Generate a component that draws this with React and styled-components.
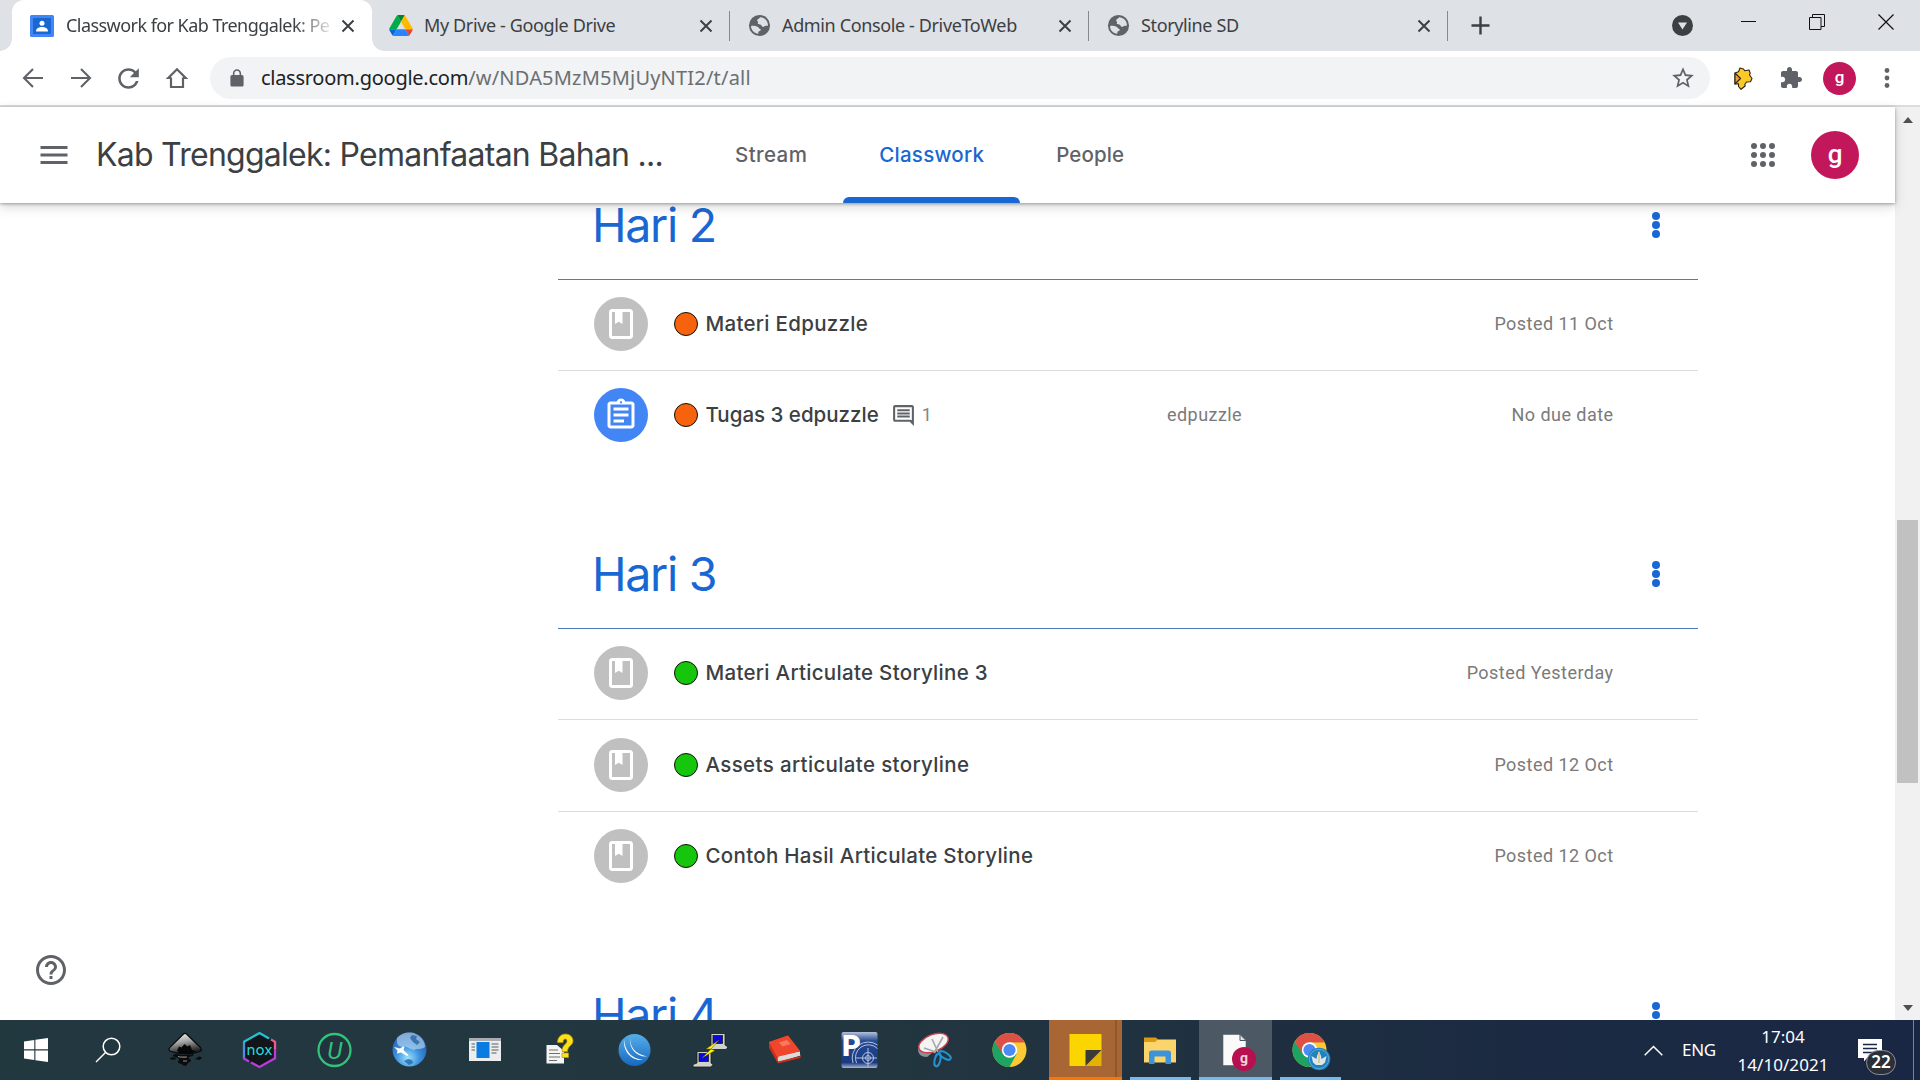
import React from "react";
import styled, { createGlobalStyle, css } from "styled-components";

const UI_FONT = `"Noto Sans", "Open Sans", sans-serif`;
const WEB_FONT = `Roboto, "Open Sans", sans-serif`;
const TITLE_FONT = `Inter, Roboto, sans-serif`;

const GlobalStyle = createGlobalStyle`
  * { box-sizing: border-box; }
  body { margin: 0; background: #fff; overflow: hidden; }
  svg { display: block; flex: none; }
`;

const Screen = styled.div`
  width: 1920px;
  height: 1080px;
  display: flex;
  flex-direction: column;
  overflow: hidden;
  background: #fff;
`;

/* ---------- Browser tab strip ---------- */
const TabStrip = styled.div`
  height: 51px;
  flex: none;
  display: flex;
  align-items: stretch;
  padding-left: 12px;
  background: #dee1e6;
`;

const BrowserTab = styled.div`
  position: relative;
  width: ${(p) => (p.$active ? 360 : 359)}px;
  margin-right: ${(p) => (p.$active ? -1 : 0)}px;
  display: flex;
  align-items: center;
  padding: 0 17px 0 18px;
  border-radius: 12px 12px 0 0;
  background: ${(p) => (p.$active ? "#fff" : "transparent")};
  ${(p) =>
    p.$active &&
    css`
      &::before,
      &::after {
        content: "";
        position: absolute;
        bottom: 0;
        width: 12px;
        height: 12px;
      }
      &::before {
        left: -12px;
        background: radial-gradient(circle at 0 0, transparent 11.5px, #fff 12px);
      }
      &::after {
        right: -12px;
        background: radial-gradient(circle at 100% 0, transparent 11.5px, #fff 12px);
      }
    `}
`;

const TabTitle = styled.div`
  flex: 1;
  margin: 0 9px 0 ${(p) => (p.$active ? 12 : 11)}px;
  padding-bottom: 1px;
  overflow: hidden;
  white-space: nowrap;
  font: 400 18px/28px ${UI_FONT};
  letter-spacing: ${(p) => (p.$active ? -0.55 : -0.37)}px;
  color: #3c4043;
  ${(p) =>
    p.$active &&
    css`
      mask-image: linear-gradient(90deg, #000 228px, transparent 270px);
    `}
`;

const TabDivider = styled.div`
  width: 1px;
  height: 30px;
  align-self: center;
  margin-left: -1px;
  background: #85898e;
`;

const NewTab = styled.div`
  display: flex;
  align-items: center;
  margin-left: 23px;
`;

const WindowControls = styled.div`
  margin-left: auto;
  display: flex;
  align-items: center;
`;

const WindowButton = styled.div`
  width: 68.500px;
  height: 43px;
  align-self: flex-start;
  display: flex;
  align-items: center;
  justify-content: center;
`;

const TabSearch = styled.div`
  margin-right: 22px;
`;

/* ---------- Address bar ---------- */
const Toolbar = styled.div`
  height: 56px;
  flex: none;
  display: flex;
  align-items: center;
  padding: 0 9px 0;
  border-bottom: 2px solid #dadce0;
  background: #fff;
`;

const ToolButton = styled.div`
  width: ${(p) => p.$w || 48}px;
  height: 48px;
  display: flex;
  align-items: center;
  justify-content: center;
`;

const Omnibox = styled.div`
  width: 1501px;
  height: 42px;
  margin: 0 8px 0 9px;
  border-radius: 21px;
  background: #f1f3f4;
  display: flex;
  align-items: center;
  padding: 0 14px 0 20px;
`;

const Url = styled.div`
  flex: 1;
  margin-left: 17px;
  font: 400 20px/30px ${UI_FONT};
  letter-spacing: 0.2px;
  color: #6b6f73;
  b {
    font-weight: 400;
    letter-spacing: -0.25px;
    color: #202124;
  }
`;

const Avatar = styled.div`
  width: ${(p) => p.$size}px;
  height: ${(p) => p.$size}px;
  border-radius: 50%;
  background: #c2185b;
  color: #fff;
  display: flex;
  align-items: center;
  justify-content: center;
  font: 500 ${(p) => p.$font}px/1 ${WEB_FONT};
  padding-bottom: ${(p) => p.$lift || 2}px;
`;

/* ---------- Classroom page ---------- */
const Viewport = styled.div`
  flex: 1;
  min-height: 0;
  display: flex;
`;

const Page = styled.div`
  position: relative;
  width: 1895px;
  display: flex;
  flex-direction: column;
`;

const ClassHeader = styled.header`
  position: relative;
  z-index: 1;
  height: 96px;
  flex: none;
  display: flex;
  align-items: center;
  padding: 0 36px;
  background: #fff;
  box-shadow: 0 1px 3px rgba(60, 64, 67, 0.45), 0 4px 11px rgba(60, 64, 67, 0.2);
`;

const ClassName = styled.div`
  width: 603px;
  margin-left: 24px;
  white-space: nowrap;
  font: 400 32px/48px ${TITLE_FONT};
  letter-spacing: -0.74px;
  color: #3c4043;
`;

const NavTab = styled.div`
  height: 96px;
  display: flex;
  flex-direction: column;
  align-items: center;
  padding: 0 36px;
  font: 500 20.500px/96px ${TITLE_FONT};
  letter-spacing: ${(p) => p.$ls}px;
  color: ${(p) => (p.$active ? "#1967d2" : "#5f6368")};
`;

const NavUnderline = styled.div`
  width: 177px;
  height: 6px;
  margin: -6px -36px 0;
  border-radius: 6px 6px 0 0;
  background: #1967d2;
`;

const HeaderActions = styled.div`
  margin-left: auto;
  display: flex;
  align-items: center;
  gap: 30px;
`;

const Content = styled.main`
  flex: 1;
  min-height: 0;
  overflow: hidden;
`;

const Column = styled.div`
  width: 1140px;
  margin: -32px 0 0 558px;
`;

const Topic = styled.section`
  margin-bottom: 57px;
`;

const TopicHead = styled.div`
  height: 109px;
  border-bottom: 1px solid #4a7ebf;
  display: flex;
  align-items: center;
  justify-content: space-between;
  padding: 0 38px 0 34px;
`;

const TopicName = styled.h2`
  margin: 0;
  font: 400 46.500px/64px ${TITLE_FONT};
  letter-spacing: -1.300px;
  color: #1967d2;
`;

const MoreDots = styled.div`
  display: flex;
  flex-direction: column;
  gap: 1px;
  i {
    width: 8px;
    height: 8px;
    border-radius: 50%;
    background: #1967d2;
  }
`;

const Row = styled.div`
  height: ${(p) => (p.$first ? 91 : 92)}px;
  padding: ${(p) => (p.$middle ? 18 : 17)}px 84.500px 0 36px;
  display: grid;
  grid-template-columns: 573px 1fr auto;
  grid-template-rows: 54px;
  align-items: center;
  border-bottom: ${(p) => (p.$last ? "0" : "1px solid #dadce0")};
`;

const RowTitle = styled.div`
  display: flex;
  align-items: center;
  white-space: nowrap;
  font: 500 20.500px/30px ${TITLE_FONT};
  letter-spacing: ${(p) => p.$ls ?? 0.3}px;
  color: #3c4043;
`;

const TypeBadge = styled.div`
  width: 54px;
  height: 54px;
  border-radius: 50%;
  display: flex;
  align-items: center;
  justify-content: center;
  background: ${(p) => (p.$task ? "#4285f4" : "#c0c0c0")};
`;

const Bullet = styled.div`
  width: 24px;
  height: 24px;
  margin: -1px 7.500px 0 26px;
  border-radius: 50%;
  border: 1.500px solid #10100c;
  background: ${(p) => p.$color};
`;

const Comments = styled.div`
  display: flex;
  align-items: center;
  margin-left: 12px;
  gap: 6px;
  font: 400 18px/24px ${WEB_FONT};
  color: #80868b;
`;

const Meta = styled.div`
  font: 400 18px/24px ${WEB_FONT};
  letter-spacing: 0.45px;
  color: #7a7a7a;
  white-space: nowrap;
`;

const HelpButton = styled.div`
  position: absolute;
  left: 33px;
  bottom: 32px;
`;

const Scrollbar = styled.div`
  width: 25px;
  background: #f1f1f1;
  display: flex;
  flex-direction: column;
  align-items: center;
  padding: 10px 0 9px;
`;

const Thumb = styled.div`
  width: 21px;
  height: 263px;
  margin: 397px 0 auto;
  background: #c1c1c1;
`;

const Arrow = styled.div`
  width: 0;
  height: 0;
  border: 5.500px solid transparent;
  border-width: ${(p) => (p.$up ? "0 5.500px 6px" : "6px 5.500px 0")};
  ${(p) => (p.$up ? "border-bottom-color" : "border-top-color")}: #505050;
`;

/* ---------- Taskbar ---------- */
const Taskbar = styled.div`
  height: 60px;
  flex: none;
  display: flex;
  background: linear-gradient(90deg, #22383f 0%, #22363f 45%, #1f2f40 65%, #1b2a42 80%, #1a2744 100%);
`;

const SystemCell = styled.div`
  width: 72px;
  display: flex;
  align-items: center;
  justify-content: center;
`;

const Apps = styled.div`
  display: flex;
  gap: 2px;
  margin-left: 5px;
`;

const cellBackground = {
  none: "transparent",
  alert: "linear-gradient(90deg, #a86634 66px, #8f5730 66px, #8f5730 68px, #a86634 68px)",
  active: "#4c5965",
};

const AppCell = styled.div`
  width: 73px;
  height: 60px;
  display: flex;
  flex-direction: column;
  align-items: center;
  padding-top: 8px;
  background: ${(p) => cellBackground[p.$state || "none"]};
  > svg {
    margin-right: 2px;
  }
`;

const OpenMark = styled.div`
  width: ${(p) => (p.$full ? 73 : 61)}px;
  height: 3px;
  margin-top: 5px;
  background: ${(p) => (p.$alert ? "#ff7300" : "#76b9ed")};
`;

const Tray = styled.div`
  margin-left: auto;
  display: flex;
  align-items: center;
  font: 400 17px/28px ${UI_FONT};
  color: #fff;
`;

const Language = styled.div`
  width: 54px;
  margin-left: 19px;
  letter-spacing: -0.300px;
`;

const Clock = styled.div`
  width: 94px;
  padding-top: 1px;
  text-align: center;
  letter-spacing: 0.050px;
`;

const Notifications = styled.div`
  position: relative;
  width: 24px;
  height: 22px;
  margin: 0 31px 0 28px;
`;

const Count = styled.div`
  position: absolute;
  left: 8px;
  top: 11px;
  width: 30px;
  height: 25px;
  border: 1px solid #8c9096;
  border-radius: 13px;
  background: #2b3038;
  font: 600 17px/22px ${UI_FONT};
  text-align: center;
`;

const ShowDesktop = styled.div`
  width: 7px;
  height: 60px;
  border-left: 1px solid #7c8494;
`;

/* ---------- Icons ---------- */
const CloseX = () => (
  <svg width="14" height="14" viewBox="0 0 14 14" stroke="#3c4043" strokeWidth="2">
    <path d="M1.500 1.500l11 11M12.500 1.500l-11 11" />
  </svg>
);

const ClassroomIcon = () => (
  <svg width="24" height="22" viewBox="0 0 24 22">
    <rect width="24" height="22" rx="1.500" fill="#4285f4" />
    <rect x="3" y="3" width="18" height="16" fill="#1967d2" />
    <circle cx="12" cy="8.300" r="2.500" fill="#fff" />
    <path d="M6 16.500c0-3.200 3.200-4.400 6-4.400s6 1.200 6 4.400z" fill="#fff" />
  </svg>
);

const DriveIcon = () => (
  <svg width="24" height="21" viewBox="0 0 87.3 78">
    <path d="m6.600 66.850 3.850 6.650c.8 1.400 1.950 2.500 3.300 3.300l13.750-23.800h-27.500c0 1.550.4 3.100 1.200 4.500z" fill="#0066da" />
    <path d="m43.650 25-13.750-23.800c-1.350.8-2.500 1.900-3.300 3.300l-25.400 44a9.060 9.060 0 0 0 -1.200 4.500h27.500z" fill="#00ac47" />
    <path d="m73.550 76.800c1.350-.8 2.500-1.900 3.300-3.300l1.600-2.750 7.650-13.250c.8-1.400 1.200-2.950 1.200-4.500h-27.502l5.852 11.500z" fill="#ea4335" />
    <path d="m43.650 25 13.750-23.800c-1.350-.8-2.900-1.200-4.500-1.200h-18.500c-1.600 0-3.150.45-4.500 1.200z" fill="#00832d" />
    <path d="m59.800 53h-32.300l-13.750 23.800c1.350.8 2.900 1.200 4.500 1.200h50.800c1.600 0 3.150-.45 4.500-1.200z" fill="#2684fc" />
    <path d="m73.400 26.500-12.700-22c-.8-1.400-1.950-2.500-3.300-3.300l-13.750 23.800 16.150 28h27.450c0-1.550-.4-3.100-1.200-4.500z" fill="#ffba00" />
  </svg>
);

const GlobeIcon = () => (
  <svg width="23" height="23" viewBox="0 0 24 24">
    <circle cx="12" cy="12" r="11" fill="#5f6368" />
    <path d="M3.200 12.500c1.500-.4 5 .1 6.600.7 1.900.7 1 2.100 2.600 2.300 1.100.2 1 1.500.4 2.100-.6.7-1.900.5-2 1.400v1.700C6.500 20.300 3 16.800 3.200 12.500zM12.600 3.300c-.3 1.500-2.700 1.400-3 2.900-.2 1.200 1 1.800 1 2.700 0 .6-.6.8-.5 1.400.2.8 2.600.5 3.200 1 .9.7 1.200 2.200 2.300 2.200 1.300 0 1.900-1.300 3-1.300h2.200c.4-5-3.600-8.800-8.200-8.900z" fill="#dee1e6" />
  </svg>
);

const M = ({ d, size = 36, fill = "#5f6368" }) => (
  <svg width={size} height={size} viewBox="0 0 24 24" fill={fill}>
    <path d={d} />
  </svg>
);

const PATHS = {
  menu: "M3 18h18v-2H3v2zm0-5h18v-2H3v2zm0-7v2h18V6H3z",
  refresh: "M17.650 6.350C16.200 4.900 14.210 4 12 4c-4.420 0-7.990 3.580-7.990 8s3.570 8 7.990 8c3.730 0 6.840-2.550 7.730-6h-2.080c-.82 2.330-3.040 4-5.650 4-3.310 0-6-2.690-6-6s2.690-6 6-6c1.660 0 3.140.69 4.220 1.780L13 11h7V4l-2.350 2.350z",
  lock: "M18 8h-1V6c0-2.760-2.240-5-5-5S7 3.240 7 6v2H6c-1.100 0-2 .9-2 2v10c0 1.100.9 2 2 2h12c1.100 0 2-.9 2-2V10c0-1.100-.9-2-2-2zM8.900 8V6c0-1.710 1.390-3.100 3.100-3.100s3.100 1.390 3.100 3.100v2z",
  star: "M22 9.240l-7.190-.62L12 2 9.190 8.630 2 9.240l5.460 4.730L5.820 21 12 17.270 18.180 21l-1.630-7.030L22 9.240zM12 15.400l-3.760 2.270 1-4.280-3.320-2.880 4.380-.38L12 6.100l1.710 4.040 4.380.38-3.320 2.880 1 4.280L12 15.400z",
  puzzle: "M20.500 11H19V7c0-1.100-.9-2-2-2h-4V3.500C13 2.120 11.880 1 10.500 1S8 2.120 8 3.500V5H4c-1.100 0-1.990.9-1.990 2v3.800H3.500c1.490 0 2.700 1.210 2.700 2.700s-1.210 2.700-2.700 2.700H2V20c0 1.100.9 2 2 2h3.800v-1.500c0-1.490 1.210-2.700 2.700-2.700 1.490 0 2.700 1.210 2.700 2.700V22H17c1.100 0 2-.9 2-2v-4h1.500c1.380 0 2.500-1.120 2.500-2.500S21.880 11 20.500 11z",
  book: "M18 2H6c-1.100 0-2 .9-2 2v16c0 1.100.9 2 2 2h12c1.100 0 2-.9 2-2V4c0-1.100-.9-2-2-2zM6 4h2v8l2.500-1.500L13 12V4h5v16H6V4z",
  task: "M7 15h7v2H7zm0-4h10v2H7zm0-4h10v2H7zm12-4h-4.180C14.400 1.840 13.300 1 12 1s-2.400.84-2.820 2H5c-1.100 0-2 .9-2 2v14c0 1.100.9 2 2 2h14c1.100 0 2-.9 2-2V5c0-1.100-.9-2-2-2zm-7-.25c.41 0 .75.34.75.75s-.34.75-.75.75-.75-.34-.75-.75.34-.75.75-.75zM19 19H5V5h14v14z",
  comment: "M4 4h16v12.500L18.500 16H4V4zm0-2c-1.100 0-2 .9-2 2v12c0 1.100.9 2 2 2h14l4 4V4c0-1.100-.9-2-2-2H4zm2 10h12v2H6v-2zm0-3h12v2H6V9zm0-3h12v2H6V6z",
  help: "M11 18h2v-2h-2v2zm1-16C6.480 2 2 6.480 2 12s4.480 10 10 10 10-4.480 10-10S17.520 2 12 2zm0 18c-4.410 0-8-3.590-8-8s3.590-8 8-8 8 3.590 8 8-3.590 8-8 8zm0-14c-2.210 0-4 1.790-4 4h2c0-1.100.9-2 2-2s2 .9 2 2c0 2-3 1.750-3 5h2c0-2.250 3-2.500 3-5 0-2.210-1.790-4-4-4z",
};

const BackIcon = ({ flip }) => (
  <svg width="24" height="24" viewBox="0 0 24 24" fill="none" stroke="#5f6368" strokeWidth="2.1">
    <path d={flip ? "M2 12h18.500M12 3l9 9-9 9" : "M22 12H3.500M12 3l-9 9 9 9"} />
  </svg>
);

const HomeIcon = () => (
  <svg width="24" height="24" viewBox="0 0 24 24" fill="none" stroke="#5f6368" strokeWidth="2.2">
    <path d="M6 11.500V21h12v-9.500M6 12H3.300L12 3.300l8.700 8.700H18" />
  </svg>
);

const CookieIcon = () => (
  <svg width="22" height="25" viewBox="0 0 22 24" stroke="#2a2410" strokeWidth="1.1" strokeLinejoin="round">
    <path d="M3 6.500l3.500-1.200L8 1.500l3.500 1 1.200 1.700 4.300-.7 1.200 3-.7 2L20 12l-1.500 3.200-4 .3-1.800 2.800.5 1.200L9 22.800 6.500 20v-2.800L3 17.500z" fill="#fbc926" />
    <path d="M3 6.500L8.500 12 3 17.500z" fill="#ef9c3a" />
  </svg>
);

const GridDots = () => (
  <svg width="36" height="36" viewBox="0 0 24 24" fill="#5f6368">
    {[6, 12, 18].map((y) => [6, 12, 18].map((x) => <circle key={`${x}-${y}`} cx={x} cy={y} r="2" />))}
  </svg>
);

const KebabIcon = () => (
  <svg width="8" height="22" viewBox="0 0 8 22" fill="#5f6368">
    <circle cx="4" cy="3.500" r="2.400" />
    <circle cx="4" cy="11" r="2.400" />
    <circle cx="4" cy="18.500" r="2.400" />
  </svg>
);

const Tile = ({ children }) => (
  <svg width="44" height="44" viewBox="0 0 44 44">
    {children}
  </svg>
);

const WindowsLogo = () => (
  <svg width="24" height="24" viewBox="0 0 24 24" fill="#fff">
    <path d="M0 3.400L10.300 2v9.300H0zM11.400 1.800L24 0v11.300H11.400zM0 12.400h10.300v9.500L0 20.500zM11.400 12.400H24V24l-12.600-1.800z" />
  </svg>
);

const SearchIcon = () => (
  <svg width="26" height="26" viewBox="0 0 26 26" fill="none" stroke="#fff" strokeWidth="1.5">
    <circle cx="16.500" cy="9.500" r="8.300" />
    <path d="M10.500 15.500L1 25" />
  </svg>
);

const Inkscape = () => (
  <Tile>
    <defs>
      <linearGradient id="ink" x1="0" y1="0" x2="0.3" y2="1">
        <stop offset="0" stopColor="#fff" />
        <stop offset="0.500" stopColor="#a4a4a4" />
        <stop offset="1" stopColor="#222" />
      </linearGradient>
    </defs>
    <path d="M20.500 6c1-.8 2-.8 3 0l14 13.500c2 2.500.5 3.800-2 4.500l-6 1.500-13 .2-8-2.200c-2.500-.8-3.500-2-1.500-4.200z" fill="url(#ink)" stroke="#080808" strokeWidth="1.200" />
    <path d="M14 22.500l2-4 2.500 1 3-3.500 3 2.500 2.500-1.500L29 22l4 1.500-6 3-10-.5z" fill="#070707" />
    <path d="M14 26c4 1.500 12 1 16 0 2 1.500-2 2.500-4 3s2.500 2.500 2 4-3 1-3.500 3-3 2.500-4.500 1-4-1-5-2.500 2-2 1-3.500-5-2-6-3 2-2.500 4-2z" fill="#0c0c0c" />
    <path d="M15 28.500c3 1 6 .5 9 .5M20 33h4" stroke="#888" strokeWidth="1.200" fill="none" />
    <ellipse cx="10" cy="30.500" rx="3" ry="1.200" fill="#0c0c0c" />
    <path d="M32 31l4-2.500 3 1-2 2.500z" fill="#0c0c0c" />
  </Tile>
);

const Nox = () => (
  <Tile>
    <defs>
      <linearGradient id="nox" x1="0" y1="0" x2="0.8" y2="1">
        <stop offset="0" stopColor="#28c6d8" />
        <stop offset="0.450" stopColor="#5a79d8" />
        <stop offset="1" stopColor="#d33fe0" />
      </linearGradient>
    </defs>
    <path d="M21.500 5.500L37 14v16l-15.500 8.500L6 30V14z" fill="#12151a" />
    <path d="M6 30.500V13.500" fill="none" stroke="#4d8fe0" strokeWidth="2.3" />
    <path d="M5.500 14L21.500 5l9.500 5.500" fill="none" stroke="#28c0d4" strokeWidth="2.3" />
    <path d="M6 29.500v1l5 3M37 20v10.300L21.500 39 13 34.500" fill="none" stroke="#b93bdc" strokeWidth="2.3" />
    <path d="M33 11.500l4 2.300V21" fill="none" stroke="#ef5a8c" strokeWidth="2.3" />
    <text x="21.500" y="26.500" fontFamily="Inter, sans-serif" fontSize="14.500" textAnchor="middle" textLength="26" lengthAdjust="spacingAndGlyphs" fill="#25dcd8">nox</text>
  </Tile>
);

const Uninstaller = () => (
  <Tile>
    <circle cx="21.500" cy="22" r="16" fill="#22333e" stroke="#31c27c" strokeWidth="2.300" />
    <text x="21.700" y="30.500" fontFamily="Roboto, sans-serif" fontStyle="italic" fontSize="24" textAnchor="middle" fill="#31c27c">U</text>
  </Tile>
);

const Globe = () => (
  <Tile>
    <defs>
      <radialGradient id="globe" cx="0.450" cy="0.750" r="0.800">
        <stop offset="0" stopColor="#9be0ff" />
        <stop offset="0.450" stopColor="#3a8fdc" />
        <stop offset="1" stopColor="#1c4c9c" />
      </radialGradient>
    </defs>
    <circle cx="21.500" cy="21.500" r="17" fill="url(#globe)" />
    <path d="M9 10c4-5 13-7 19-4 6 3 9 8 9 13-4 3-8 1-11 3-5-1-7-4-11-3-5 0-7-4-6-9z" fill="#b9d6f0" opacity="0.650" />
    <path d="M24 7l5 1-1 3 4 3-3 3-4-3-3-4zM16 33l4-2 4 1 1 3-4 2z" fill="#2c6ca8" opacity="0.850" />
    <path d="M6 19l6 1.500 3-2 1.500.5-1 3 5 5-1.500 1-6-3.500-4 1 .5-3z" fill="#fff" />
  </Tile>
);

const WindowApp = () => (
  <Tile>
    <rect x="6" y="10" width="32" height="23" fill="#eceeee" />
    <rect x="6" y="10" width="32" height="3" fill="#a9adb0" />
    <rect x="13.500" y="14" width="13" height="16" fill="#0a7be0" />
    <path d="M8.500 16h3.500M8.500 19h3.500M8.500 22h3.500M28.500 16h7M28.500 19h7M28.500 22h7M28.500 25h5" stroke="#8a8f92" strokeWidth="1.300" />
  </Tile>
);

const HelpDoc = () => (
  <Tile>
    <path d="M8.500 17H19l7 6v12.500H8.500z" fill="#f4f4f2" />
    <path d="M11 22h9M11 25.500h11M11 29h11M11 32.500h8" stroke="#6b6f72" strokeWidth="1" />
    <path d="M19.500 14.500c0-5.500 4-8.500 8-8.500s7.500 2.800 7.500 7-5.500 5-5.500 10.500h-5.500c0-7 5-7 5-10.500 0-3-4-3-4 1.500zM24 25h6.500v4.500H24z" fill="#ffe11a" stroke="#b99a08" strokeWidth="0.700" />
  </Tile>
);

const BlueOrb = () => (
  <Tile>
    <defs>
      <linearGradient id="orb" x1="0" y1="0" x2="0" y2="1">
        <stop offset="0" stopColor="#56aee8" />
        <stop offset="1" stopColor="#1668c0" />
      </linearGradient>
    </defs>
    <circle cx="21.500" cy="22" r="16" fill="url(#orb)" />
    <path d="M11 11.500c1 10.500 6 18.500 19 20.500-12 1-20-9-19-20.500z" fill="#fff" />
    <path d="M17 9.500c0 9.500 5 16.500 17 19-11 .5-18-8-17-19z" fill="#fff" />
  </Tile>
);

const Putty = () => (
  <Tile>
    <g stroke="#1a1a1a" strokeWidth="0.800">
      <path d="M23 5.500h14V17l3 2-2 2.500H22l-2-1.500 3-2z" fill="#d2d2cc" />
      <rect x="25" y="7.500" width="9.500" height="8" fill="#0808d8" />
      <path d="M9 23.500h14V35l2 1.500L23 39H5v-2.500L9 35z" fill="#d2d2cc" />
      <rect x="11" y="25.500" width="9.500" height="8" fill="#0808d8" />
    </g>
    <path d="M31 12l-13 9h5l-9 9 13-7.500-4-1.500z" fill="#fff012" stroke="#5c5400" strokeWidth="0.500" />
  </Tile>
);

const Book = () => (
  <Tile>
    <path d="M6 14l8 15 .5 5.500L7.500 21z" fill="#a92617" />
    <path d="M14 29.500l22-6 1.500 4L15 34.500z" fill="#d9d5cf" />
    <path d="M14.500 33.500L38 28l-.5 2L15 35.500 6 20v-6l19-6.500L37 23l-22.500 6.500z" fill="#c9301d" />
    <path d="M6 14l19-6.500L37 23l-23 6z" fill="#f0472c" />
    <path d="M15.500 28.500L37 23.500v4L15.500 33z" fill="#dedad5" />
    <path d="M16 14.500l8-2.500 3.500 4-8 2.500z" fill="#f57a61" />
  </Tile>
);

const Planner = () => (
  <Tile>
    <defs>
      <linearGradient id="plan" x1="0" y1="0" x2="0" y2="1">
        <stop offset="0" stopColor="#b5c0db" />
        <stop offset="0.250" stopColor="#234b93" />
        <stop offset="0.850" stopColor="#1b3a80" />
        <stop offset="1" stopColor="#a9b6d4" />
      </linearGradient>
    </defs>
    <rect x="3.500" y="4" width="36" height="36" rx="2" fill="url(#plan)" />
    <g fill="none" stroke="#b3c1e0" strokeWidth="1">
      <circle cx="30" cy="30" r="2.500" />
      <circle cx="30" cy="30" r="5.500" />
      <path d="M39.500 17A16 16 0 0 0 15 35M39.500 20.500A13 13 0 0 0 18.500 35M30 20v19M18 30h21" />
    </g>
    <text x="4" y="27.500" fontFamily="Roboto, sans-serif" fontWeight="900" fontSize="29" fill="#fff">P</text>
  </Tile>
);

const Snipping = () => (
  <Tile>
    <path d="M5 21c0 5 3 8 9 8l16-13 4-5-28 7z" fill="#8b9095" />
    <ellipse cx="20.500" cy="15" rx="15.500" ry="8.500" transform="rotate(-22 20.500 15)" fill="#f4f4f4" stroke="#c8414a" strokeWidth="1.400" />
    <path d="M19 11l6 13M30 9L21 25M11 20l12 4" stroke="#a5a8ab" strokeWidth="1.600" />
    <g fill="none" stroke="#2292d0" strokeWidth="2">
      <ellipse cx="24.500" cy="32" rx="2.800" ry="6.500" transform="rotate(14 24.500 32)" />
      <ellipse cx="32" cy="27.500" rx="2.800" ry="6.500" transform="rotate(-58 32 27.500)" />
    </g>
  </Tile>
);

const ChromeShape = () => (
  <g>
    <circle cx="21.500" cy="22" r="17" fill="#fcc934" />
    <path d="M21.500 22L6.780 13.500A17 17 0 0 1 36.220 13.500L36.200 14.300H21.500z" fill="#dd5144" />
    <path d="M6.780 13.500A17 17 0 0 0 21.500 39l7.100-12.900L21.500 22l-7.300 2z" fill="#1da462" />
    <path d="M6.780 13.500L14.500 26l7-4V14.300h14.900a17 17 0 0 0-29.600-.8z" fill="#dd5144" />
    <circle cx="21.500" cy="22" r="7.700" fill="#fff" />
    <circle cx="21.500" cy="22" r="6.100" fill="#4c8bf5" />
  </g>
);

const StickyNotes = () => (
  <Tile>
    <path d="M6.500 6h32v17L23.500 38h-17z" fill="#fbd500" />
    <path d="M38.500 22v16h-16z" fill="#e4b300" />
    <path d="M22.500 22h16l-16 16z" fill="#3b3a38" />
  </Tile>
);

const Explorer = () => (
  <Tile>
    <path d="M6 9.500h12l3 3-3 2H6z" fill="#dc9a10" />
    <path d="M6 14h11l3-2.500h18V34.500H6z" fill="#fbd56c" />
    <path d="M11 36V25c0-1.500 1-2.500 2.500-2.500h17c1.500 0 2.500 1 2.500 2.500v11h-5.500v-7.500h-11V36z" fill="#3b94d9" />
  </Tile>
);

const FileApp = () => (
  <Tile>
    <path d="M10 6.500h17l6 6V37.500H10z" fill="#fafafa" stroke="#555e66" strokeWidth="0.600" />
    <path d="M27 6.500v6h6z" fill="#e4e6e8" stroke="#4c5660" strokeWidth="1" />
    <circle cx="31" cy="31" r="12" fill="#b8104f" />
    <text x="31" y="35" fontFamily="Roboto, sans-serif" fontWeight="700" fontSize="14" textAnchor="middle" fill="#f6cfdd">g</text>
  </Tile>
);

const ChromeProfile = () => (
  <Tile>
    <ChromeShape />
    <circle cx="31" cy="31" r="11.300" fill="#1f82bf" />
    <circle cx="31" cy="31" r="9.700" fill="none" stroke="#6db2da" strokeWidth="0.800" />
    <path d="M23.500 28l5 3 .5-3 2-5 2 5 .5 3 5-3-1.500 6.500-3 2.500h-6l-3-2.500z" fill="#dfe6ea" />
    <path d="M31 24v11" stroke="#d8c07c" strokeWidth="1.500" />
  </Tile>
);

/* ---------- Data ---------- */
const ORANGE = "#f7630c";
const GREEN = "#16c60c";

const browserTabs = [
  { title: "Classwork for Kab Trenggalek: Pe", icon: <ClassroomIcon />, active: true },
  { title: "My Drive - Google Drive", icon: <DriveIcon /> },
  { title: "Admin Console - DriveToWeb", icon: <GlobeIcon /> },
  { title: "Storyline SD", icon: <GlobeIcon /> },
];

const topics = [
  {
    name: "Hari 2",
    rows: [
      { title: "Materi Edpuzzle", color: ORANGE, date: "Posted 11 Oct" },
      { title: "Tugas 3 edpuzzle", color: ORANGE, date: "No due date", note: "edpuzzle", comments: 1, task: true, spacing: 0 },
    ],
  },
  {
    name: "Hari 3",
    rows: [
      { title: "Materi Articulate Storyline 3", color: GREEN, date: "Posted Yesterday" },
      { title: "Assets articulate storyline", color: GREEN, date: "Posted 12 Oct", spacing: 0.36 },
      { title: "Contoh Hasil Articulate Storyline", color: GREEN, date: "Posted 12 Oct" },
    ],
  },
  { name: "Hari 4", rows: [] },
];

const pinnedApps = [
  Inkscape, Nox, Uninstaller, Globe, WindowApp, HelpDoc, BlueOrb, Putty, Book, Planner, Snipping,
];

export default function App() {
  return (
    <Screen>
      <GlobalStyle />
      <TabStrip>
        {browserTabs.map((t) => (
          <React.Fragment key={t.title}>
            <BrowserTab $active={t.active}>
              {t.icon}
              <TabTitle $active={t.active}>{t.title}</TabTitle>
              <CloseX />
            </BrowserTab>
            {!t.active && <TabDivider />}
          </React.Fragment>
        ))}
        <NewTab>
          <svg width="19" height="19" viewBox="0 0 19 19" stroke="#3c4043" strokeWidth="2.400">
            <path d="M9.500 .5v18M.5 9.500h18" />
          </svg>
        </NewTab>
        <WindowControls>
          <TabSearch>
            <svg width="21" height="21" viewBox="0 0 21 21">
              <circle cx="10.500" cy="10.500" r="10.500" fill="#3c4043" />
              <path d="M6 7.500h9l-4.500 7z" fill="#dee1e6" />
            </svg>
          </TabSearch>
          <WindowButton>
            <svg width="15" height="15" viewBox="0 0 15 15"><path d="M0 7.500h15" stroke="#111" /></svg>
          </WindowButton>
          <WindowButton>
            <svg width="16" height="16" viewBox="0 0 16 16" fill="none" stroke="#111">
              <path d="M.5 3.500h11.500v12H.5zM3.500 3.500v-3h12v12H12" />
            </svg>
          </WindowButton>
          <WindowButton>
            <svg width="16" height="16" viewBox="0 0 16 16" stroke="#111" strokeWidth="1.200"><path d="M.5.5l15 15M15.500.5l-15 15" /></svg>
          </WindowButton>
        </WindowControls>
      </TabStrip>

      <Toolbar>
        <ToolButton><BackIcon /></ToolButton>
        <ToolButton><BackIcon flip /></ToolButton>
        <ToolButton><M d={PATHS.refresh} size={31} /></ToolButton>
        <ToolButton><HomeIcon /></ToolButton>
        <Omnibox>
          <svg width="14" height="18" viewBox="3.500 1 17 21.200" fill="#5f6368"><path d={PATHS.lock} /></svg>
          <Url><b>classroom.google.com</b>/w/NDA5MzM5MjUyNTI2/t/all</Url>
          <M d={PATHS.star} size={26} />
        </Omnibox>
        <ToolButton $w={49}><CookieIcon /></ToolButton>
        <ToolButton $w={48}><M d={PATHS.puzzle} size={24} /></ToolButton>
        <ToolButton $w={49}><Avatar $size={33} $font={17}>g</Avatar></ToolButton>
        <ToolButton $w={47}><KebabIcon /></ToolButton>
      </Toolbar>

      <Viewport>
        <Page>
          <ClassHeader>
            <M d={PATHS.menu} />
            <ClassName>Kab Trenggalek: Pemanfaatan Bahan ...</ClassName>
            <NavTab $ls={0.4}>Stream</NavTab>
            <NavTab $ls={0.25} $active>Classwork<NavUnderline /></NavTab>
            <NavTab $ls={0.1}>People</NavTab>
            <HeaderActions>
              <GridDots />
              <Avatar $size={48} $font={26} $lift={3}>g</Avatar>
            </HeaderActions>
          </ClassHeader>
          <Content>
            <Column>
              {topics.map((topic) => (
                <Topic key={topic.name}>
                  <TopicHead>
                    <TopicName>{topic.name}</TopicName>
                    <MoreDots><i /><i /><i /></MoreDots>
                  </TopicHead>
                  {topic.rows.map((r, i) => {
                    const last = i === topic.rows.length - 1;
                    return (
                      <Row key={r.title} $first={i === 0} $last={last} $middle={i > 0 && !last}>
                        <RowTitle $ls={r.spacing}>
                          <TypeBadge $task={r.task}>
                            <M d={r.task ? PATHS.task : PATHS.book} fill="#fff" />
                          </TypeBadge>
                          <Bullet $color={r.color} />
                          {r.title}
                          {r.comments && (
                            <Comments><M d={PATHS.comment} size={25} />{r.comments}</Comments>
                          )}
                        </RowTitle>
                        <Meta>{r.note}</Meta>
                        <Meta>{r.date}</Meta>
                      </Row>
                    );
                  })}
                </Topic>
              ))}
            </Column>
          </Content>
          <HelpButton><M d={PATHS.help} /></HelpButton>
        </Page>
        <Scrollbar>
          <Arrow $up />
          <Thumb />
          <Arrow />
        </Scrollbar>
      </Viewport>

      <Taskbar>
        <SystemCell><WindowsLogo /></SystemCell>
        <SystemCell><SearchIcon /></SystemCell>
        <Apps>
          {pinnedApps.map((Icon, i) => (
            <AppCell key={i}><Icon /></AppCell>
          ))}
          <AppCell><Tile><ChromeShape /></Tile></AppCell>
          <AppCell $state="alert"><StickyNotes /><OpenMark $full $alert /></AppCell>
          <AppCell><Explorer /><OpenMark /></AppCell>
          <AppCell $state="active"><FileApp /><OpenMark $full /></AppCell>
          <AppCell><ChromeProfile /><OpenMark /></AppCell>
        </Apps>
        <Tray>
          <svg width="19" height="11" viewBox="0 0 19 11" fill="none" stroke="#fff" strokeWidth="1.500"><path d="M.7 10.300l8.800-8.800 8.800 8.800" /></svg>
          <Language>ENG</Language>
          <Clock>17:04<br />14/10/2021</Clock>
          <Notifications>
            <svg width="24" height="24" viewBox="0 0 24 24">
              <path d="M0 0h24v19H9l-3 3.500V19H0z" fill="#fff" />
              <path d="M5 5.500h14M5 9.500h14M5 13.500h14" stroke="#1a2744" strokeWidth="1.300" />
            </svg>
            <Count>22</Count>
          </Notifications>
          <ShowDesktop />
        </Tray>
      </Taskbar>
    </Screen>
  );
}
